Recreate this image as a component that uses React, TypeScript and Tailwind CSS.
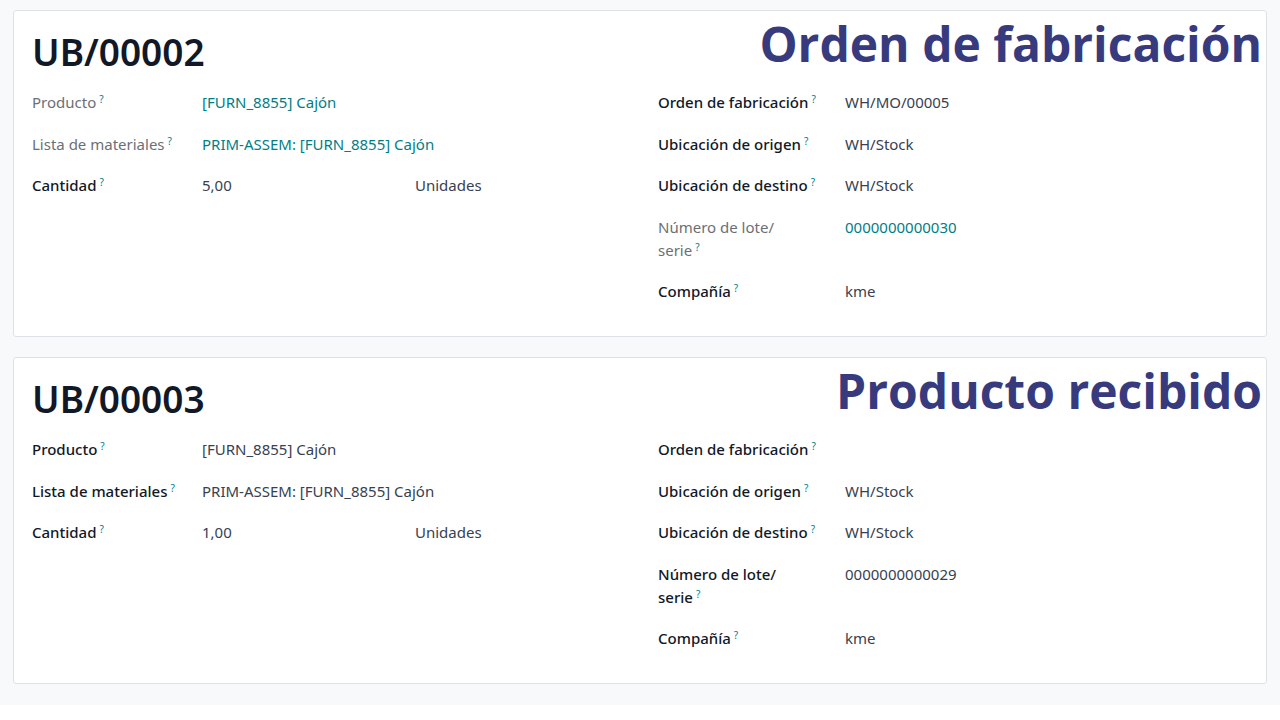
import React from "react";

type Field = {
  label: string;
  label2?: string;
  value?: string;
  unit?: string;
  muted?: boolean;
  link?: boolean;
};

type Record = {
  name: string;
  banner: string;
  left: Field[];
  right: Field[];
};

const records: Record[] = [
  {
    name: "UB/00002",
    banner: "Orden de fabricación",
    left: [
      { label: "Producto", value: "[FURN_8855] Cajón", muted: true, link: true },
      { label: "Lista de materiales", value: "PRIM-ASSEM: [FURN_8855] Cajón", muted: true, link: true },
      { label: "Cantidad", value: "5,00", unit: "Unidades" },
    ],
    right: [
      { label: "Orden de fabricación", value: "WH/MO/00005" },
      { label: "Ubicación de origen", value: "WH/Stock" },
      { label: "Ubicación de destino", value: "WH/Stock" },
      { label: "Número de lote/", label2: "serie", value: "0000000000030", muted: true, link: true },
      { label: "Compañía", value: "kme" },
    ],
  },
  {
    name: "UB/00003",
    banner: "Producto recibido",
    left: [
      { label: "Producto", value: "[FURN_8855] Cajón" },
      { label: "Lista de materiales", value: "PRIM-ASSEM: [FURN_8855] Cajón" },
      { label: "Cantidad", value: "1,00", unit: "Unidades" },
    ],
    right: [
      { label: "Orden de fabricación" },
      { label: "Ubicación de origen", value: "WH/Stock" },
      { label: "Ubicación de destino", value: "WH/Stock" },
      { label: "Número de lote/", label2: "serie", value: "0000000000029" },
      { label: "Compañía", value: "kme" },
    ],
  },
];

function Label({ field, width }: { field: Field; width: string }) {
  const tone = field.muted ? "text-[#6b6f75]" : "font-medium text-[#111827]";
  return (
    <div className={`${width} shrink-0 pr-4`}>
      <span className={tone}>{field.label}</span>
      {field.label2 && (
        <>
          <br />
          <span className={tone}>{field.label2}</span>
        </>
      )}
      <sup className="ml-[3px] text-[10px] text-[#017e84]">?</sup>
    </div>
  );
}

function Row({ field, labelWidth }: { field: Field; labelWidth: string }) {
  return (
    <div className="flex">
      <Label field={field} width={labelWidth} />
      <div
        className={`w-[213px] shrink-0 whitespace-nowrap ${field.link ? "text-[#017e84]" : "text-[#374151]"}`}
      >
        {field.value}
      </div>
      {field.unit && <div className="text-[#374151]">{field.unit}</div>}
    </div>
  );
}

function RecordCard({ record }: { record: Record }) {
  return (
    <div className="relative rounded-[3px] border border-[#dee2e6] bg-white pl-[18px] pt-[14px] pb-[33px]">
      <h1 className="text-[37px] font-semibold leading-[54px] text-[#111827]">{record.name}</h1>
      <div className="mt-[12px] flex">
        <div className="flex w-[626px] flex-col gap-y-[18.5px]">
          {record.left.map((f) => (
            <Row key={f.label} field={f} labelWidth="w-[170px]" />
          ))}
        </div>
        <div className="flex flex-col gap-y-[18.5px]">
          {record.right.map((f) => (
            <Row key={f.label} field={f} labelWidth="w-[187px]" />
          ))}
        </div>
      </div>
      <div className="absolute right-[4px] top-[-2px] font-['Open_Sans',sans-serif] text-[48px] font-bold leading-[70px] text-[#373a7d]">
        {record.banner}
      </div>
    </div>
  );
}

export default function App() {
  return (
    <div className="min-h-[720px] bg-white font-['Noto_Sans',sans-serif] text-[15px] leading-[23px]">
      <div className="flex flex-col gap-[20px] bg-[#f8f9fa] px-[13px] pt-[10px] pb-[21px]">
        {records.map((r) => (
          <RecordCard key={r.name} record={r} />
        ))}
      </div>
    </div>
  );
}
